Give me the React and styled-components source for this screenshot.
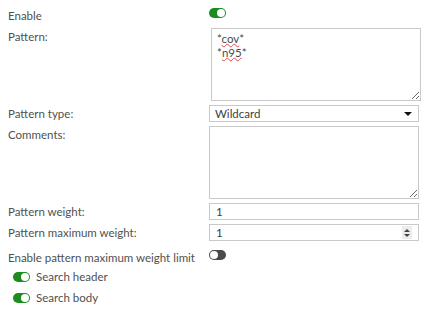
import styled, { createGlobalStyle } from 'styled-components';

const GlobalStyle = createGlobalStyle`
    body{
        margin: 0;
        background: #fff;
        font-family: Lato, "Open Sans", sans-serif;
        font-size: 11.5px;
        color: #505050;
    }
`;

const App = () => {
    return (
        <>
            <GlobalStyle />
            <StyledForm>
                <StyledGrid>
                    <StyledLabel>Enable</StyledLabel>
                    <StyledToggleCell>
                        <Toggle on />
                    </StyledToggleCell>

                    <StyledLabel>Pattern:</StyledLabel>
                    <StyledTextBox shift>
                        <div>*<StyledTypo>cov</StyledTypo>*</div>
                        <div>*<StyledTypo>n95</StyledTypo>*</div>
                    </StyledTextBox>

                    <StyledLabel>Pattern type:</StyledLabel>
                    <StyledSelectWrap>
                        <StyledSelect defaultValue="wildcard">
                            <option value="wildcard">Wildcard</option>
                            <option value="regex">Regular expression</option>
                        </StyledSelect>
                    </StyledSelectWrap>

                    <StyledLabel>Comments:</StyledLabel>
                    <StyledTextBox />

                    <StyledLabel>Pattern weight:</StyledLabel>
                    <StyledInput defaultValue="1" />

                    <StyledLabel>Pattern maximum weight:</StyledLabel>
                    <StyledNumberBox>
                        <StyledBareInput defaultValue="1" />
                        <StyledSpinner>
                            <StyledArrow up />
                            <StyledArrow />
                        </StyledSpinner>
                    </StyledNumberBox>

                    <StyledLabel gap>Enable pattern maximum weight limit</StyledLabel>
                    <StyledToggleCell gap>
                        <Toggle />
                    </StyledToggleCell>
                </StyledGrid>

                <StyledOptions>
                    <StyledOption>
                        <Toggle on />
                        <span>Search header</span>
                    </StyledOption>
                    <StyledOption>
                        <Toggle on />
                        <span>Search body</span>
                    </StyledOption>
                </StyledOptions>
            </StyledForm>
        </>
    );
};

const Toggle = ({ on }) => (
    <StyledToggle on={on ? 1 : 0}>
        <StyledKnob on={on ? 1 : 0} />
    </StyledToggle>
);

const StyledForm = styled.div`
    padding: 7px 8px;
`;

const StyledGrid = styled.div`
    display: grid;
    grid-template-columns: 201px 210px;
    row-gap: 4px;
    align-items: start;
`;

const StyledLabel = styled.div`
    line-height: 16px;
    padding-top: 1px;
    white-space: nowrap;
    margin-top: ${props => props.gap ? '4px' : '0'};
`;

const StyledToggleCell = styled.div`
    height: 16px;
    display: flex;
    align-items: flex-start;
    padding-top: 1px;
    margin-top: ${props => props.gap ? '4px' : '0'};
`;

const StyledToggle = styled.span`
    display: inline-flex;
    align-items: center;
    justify-content: ${props => props.on ? 'flex-end' : 'flex-start'};
    box-sizing: border-box;
    width: 17px;
    height: 10px;
    border-radius: 5px;
    padding: 1px;
    background: ${props => props.on ? '#1c8c21' : '#4a4a4a'};
    flex-shrink: 0;
`;

const StyledKnob = styled.span`
    width: 8px;
    height: 8px;
    border-radius: 50%;
    background: #fff;
`;

const StyledTextBox = styled.div`
    box-sizing: border-box;
    width: 210px;
    height: 73px;
    margin-left: ${props => props.shift ? '2px' : '0'};
    border: 1px solid #c9c9c9;
    padding: 3px 5px;
    line-height: 14px;
    color: #4a4a4a;
    overflow: auto;
    resize: both;
`;

const StyledTypo = styled.span`
    text-decoration: underline wavy #e04848;
    text-decoration-thickness: 1px;
    text-underline-offset: 0px;
`;

const StyledSelectWrap = styled.div`
    position: relative;
    width: 210px;
    height: 17px;

    &::after{
        content: '';
        position: absolute;
        right: 7px;
        top: 7px;
        border-left: 4px solid transparent;
        border-right: 4px solid transparent;
        border-top: 4px solid #111;
        pointer-events: none;
    }
`;

const StyledSelect = styled.select`
    appearance: none;
    box-sizing: border-box;
    width: 100%;
    height: 100%;
    border: 1px solid #c9c9c9;
    border-radius: 0;
    background: #fff;
    padding: 0 5px;
    font-family: inherit;
    font-size: 11.5px;
    color: #404040;
    outline: none;
`;

const StyledInput = styled.input`
    box-sizing: border-box;
    width: 210px;
    height: 17px;
    border: 1px solid #c9c9c9;
    padding: 0 6px;
    font-family: inherit;
    font-size: 11.5px;
    color: #404040;
    outline: none;
`;

const StyledNumberBox = styled.div`
    box-sizing: border-box;
    display: flex;
    align-items: center;
    width: 210px;
    height: 17px;
    border: 1px solid #c9c9c9;
    padding-right: 6px;
`;

const StyledBareInput = styled.input`
    flex: 1;
    min-width: 0;
    border: none;
    padding: 0 6px;
    font-family: inherit;
    font-size: 11.5px;
    color: #404040;
    outline: none;
    background: transparent;
`;

const StyledSpinner = styled.span`
    display: flex;
    flex-direction: column;
    align-items: center;
    justify-content: center;
    gap: 2px;
    width: 10px;
    height: 13px;
    background: #ececec;
`;

const StyledArrow = styled.span`
    width: 0;
    height: 0;
    border-left: 3px solid transparent;
    border-right: 3px solid transparent;
    ${props => props.up ? 'border-bottom: 3px solid #444;' : 'border-top: 3px solid #444;'}
`;

const StyledOptions = styled.div`
    display: flex;
    flex-direction: column;
    gap: 5px;
    margin-top: 3px;
    padding-left: 5px;
`;

const StyledOption = styled.div`
    display: flex;
    align-items: center;
    gap: 6px;
    line-height: 16px;
`;

export default App;
